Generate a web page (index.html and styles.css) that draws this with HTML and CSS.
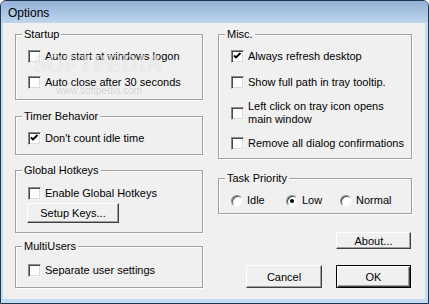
FILE: index.html
```html
<!DOCTYPE html>
<html lang="en">
<head>
  <meta charset="UTF-8" />
  <title>Options</title>
  <link rel="stylesheet" href="styles.css">
</head>
<body>
  <div class="window">
    <div class="titlebar">Options</div>

    <div class="client">
      <div class="column column-left">
        <div class="group group-startup">
          <div class="group-title">Startup</div>
          <div class="options">
            <label class="check"><span class="box"></span><span>Auto start at windows logon</span></label>
            <label class="check"><span class="box"></span><span>Auto close after 30 seconds</span></label>
          </div>
        </div>

        <div class="group group-timer">
          <div class="group-title">Timer Behavior</div>
          <div class="options">
            <label class="check"><span class="box checked"><svg viewBox="0 0 11 11"><path d="M2 4.5 L4 6.5 L8.5 2" /></svg></span><span>Don't count idle time</span></label>
          </div>
        </div>

        <div class="group group-hotkeys">
          <div class="group-title">Global Hotkeys</div>
          <div class="options">
            <label class="check"><span class="box"></span><span>Enable Global Hotkeys</span></label>
            <button class="btn btn-setup">Setup Keys...</button>
          </div>
        </div>

        <div class="group group-multi">
          <div class="group-title">MultiUsers</div>
          <div class="options">
            <label class="check"><span class="box"></span><span>Separate user settings</span></label>
          </div>
        </div>
      </div>

      <div class="column column-right">
        <div class="group group-misc">
          <div class="group-title">Misc.</div>
          <div class="options">
            <label class="check"><span class="box checked"><svg viewBox="0 0 11 11"><path d="M2 4.5 L4 6.5 L8.5 2" /></svg></span><span>Always refresh desktop</span></label>
            <label class="check"><span class="box"></span><span>Show full path in tray tooltip.</span></label>
            <label class="check check-wrap"><span class="box"></span><span class="wrap-text">Left click on tray icon opens main window</span></label>
            <label class="check"><span class="box"></span><span>Remove all dialog confirmations</span></label>
          </div>
        </div>

        <div class="group group-priority">
          <div class="group-title">Task Priority</div>
          <div class="radios">
            <label class="radio"><span class="dot"></span><span>Idle</span></label>
            <label class="radio"><span class="dot selected"></span><span>Low</span></label>
            <label class="radio"><span class="dot"></span><span>Normal</span></label>
          </div>
        </div>

        <div class="actions">
          <button class="btn btn-about">About...</button>
          <div class="action-row">
            <button class="btn btn-cancel">Cancel</button>
            <button class="btn btn-ok">OK</button>
          </div>
        </div>
      </div>
    </div>

    <div class="watermark">SOFTPEDIA</div>
    <div class="watermark-url">www.softpedia.com</div>
  </div>
</body>
</html>
```

FILE: styles.css
```css
body {
  margin: 0;
  font-family: "Liberation Sans", Arial, sans-serif;
  font-size: 11px;
  color: #000;
}

.window {
  position: relative;
  width: 429px;
  height: 304px;
  box-sizing: border-box;
  border: 1px solid #1f3550;
  border-radius: 6px 6px 0 0;
  background: #c4dcf2;
  display: flex;
  flex-direction: column;
  overflow: hidden;
}

.titlebar {
  flex: none;
  height: 22px;
  line-height: 24px;
  padding-left: 7px;
  font-size: 12px;
  background: linear-gradient(#93b2d8, #bed5ec);
}

.client {
  flex: 1;
  margin: 0 3px 4px 2px;
  padding: 11px 0 0 12px;
  background: #f0f0f0;
  display: flex;
  gap: 15px;
}

.column {
  display: flex;
  flex-direction: column;
}

.column-left {
  width: 188px;
}

.column-right {
  width: 194px;
}

/* group boxes */
.group {
  border: 1px solid #a0a0a0;
  box-shadow: 1px 1px 0 #fff, inset 1px 1px 0 #fff;
  padding-bottom: 10px;
}

.group-title {
  width: fit-content;
  margin: -7px 0 0 6px;
  padding: 0 2px;
  line-height: 13px;
  background: #f0f0f0;
}

.options {
  display: flex;
  flex-direction: column;
  gap: 13px;
  margin-top: 9px;
  padding-left: 12px;
}

.group-timer {
  margin-top: 16px;
  padding-bottom: 9px;
}

.group-hotkeys {
  margin-top: 15px;
  padding-bottom: 9px;
}

.group-hotkeys .options {
  gap: 3px;
  margin-top: 10px;
}

.group-multi {
  margin-top: 13px;
}

.group-multi .options {
  margin-top: 11px;
}

.group-misc {
  padding-bottom: 8px;
}

.group-misc .options {
  gap: 11px;
}

.group-misc .options .check:first-child {
  margin-bottom: 2px;
}

.group-priority {
  margin-top: 19px;
  padding-bottom: 6px;
}

/* checkboxes */
.check {
  display: flex;
  align-items: center;
  gap: 4px;
  line-height: 13px;
  white-space: nowrap;
}

.wrap-text {
  white-space: normal;
  width: 145px;
}

.box {
  flex: none;
  width: 13px;
  height: 13px;
  box-sizing: border-box;
  background: #fff;
  border: 1px solid;
  border-color: #8a8a8a #f4f4f4 #f4f4f4 #8a8a8a;
  box-shadow: inset 1px 1px 0 #4a4a4a, inset -1px -1px 0 #dcdcdc;
}

.box svg {
  display: block;
  width: 11px;
  height: 11px;
}

.box path {
  fill: none;
  stroke: #000;
  stroke-width: 1.9;
}

/* radios */
.radios {
  display: grid;
  grid-template-columns: 55px 54px auto;
  margin-top: 9px;
  padding-left: 12px;
}

.radio {
  display: flex;
  align-items: center;
  gap: 4px;
  line-height: 13px;
}

.dot {
  flex: none;
  width: 12px;
  height: 12px;
  box-sizing: border-box;
  border-radius: 50%;
  background: #fff;
  border: 1px solid;
  border-color: #8a8a8a #f4f4f4 #f4f4f4 #8a8a8a;
  box-shadow: inset 1px 1px 0 #4a4a4a;
  display: flex;
  align-items: center;
  justify-content: center;
}

.dot.selected::after {
  content: "";
  width: 4px;
  height: 4px;
  border-radius: 50%;
  background: #000;
}

/* buttons */
.btn {
  font: inherit;
  color: #000;
  padding: 0;
  background: #f0f0f0;
  border: 1px solid;
  border-color: #fff #404040 #404040 #fff;
  box-shadow: inset -1px -1px 0 #a0a0a0;
}

.btn-setup {
  align-self: flex-start;
  width: 92px;
  height: 20px;
  margin-left: -1px;
}

.actions {
  display: flex;
  flex-direction: column;
  align-items: flex-end;
  padding-right: 1px;
}

.btn-about {
  width: 75px;
  height: 17px;
  margin-top: 18px;
}

.action-row {
  display: flex;
  gap: 14px;
  margin-top: 16px;
}

.btn-cancel {
  width: 76px;
  height: 23px;
}

.btn-ok {
  width: 75px;
  height: 23px;
  border-color: #000;
  box-shadow: inset 1px 1px 0 #fff, inset -1px -1px 0 #404040, inset -2px -2px 0 #a0a0a0;
}

/* screenshot watermark */
.watermark {
  position: absolute;
  left: 33px;
  top: 49px;
  font-family: "Liberation Serif", serif;
  font-size: 25px;
  font-weight: bold;
  color: rgba(255, 255, 255, 0.55);
  text-shadow: 0 0 1px rgba(0, 0, 0, 0.12);
  transform: scaleX(0.9);
  transform-origin: left;
}

.watermark-url {
  position: absolute;
  left: 55px;
  top: 84px;
  font-size: 10px;
  color: rgba(120, 120, 120, 0.25);
}
```
